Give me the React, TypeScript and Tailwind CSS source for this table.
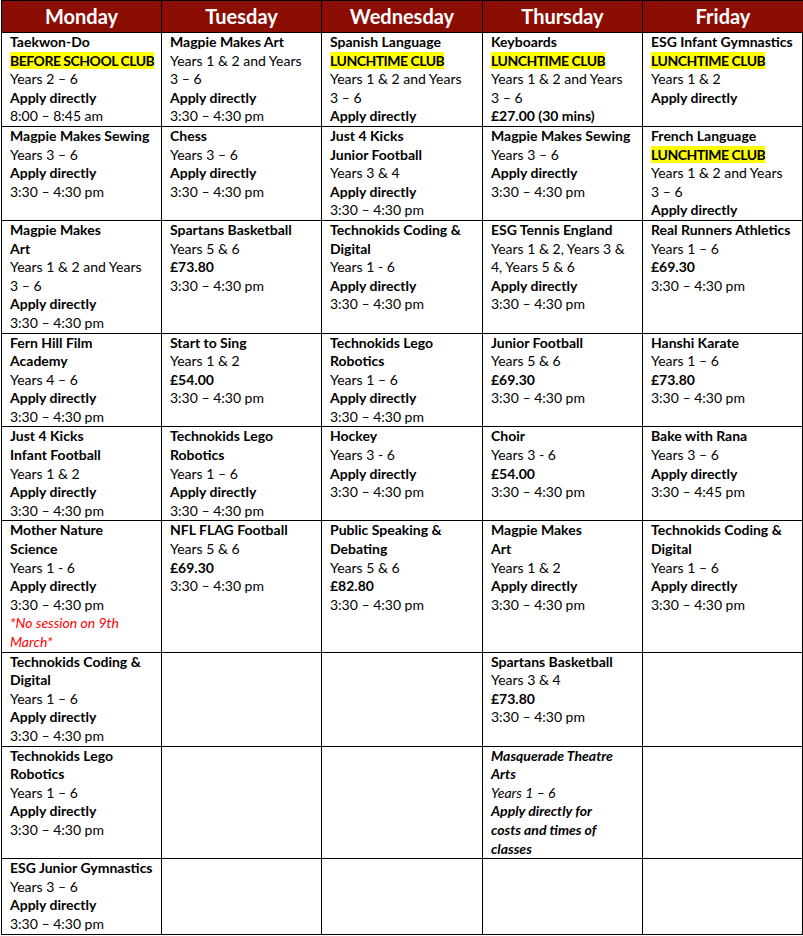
import React from 'react';

type Kind = 'b' | 'n' | 'h' | 'r' | 'bi' | 'i';
type Line = [Kind, string];
type Cell = Line[];

const days = ['Monday', 'Tuesday', 'Wednesday', 'Thursday', 'Friday'];

const time = '3:30 – 4:30 pm';
const apply: Line = ['b', 'Apply directly'];

const rows: Cell[][] = [
  [
    [['b', 'Taekwon-Do'], ['h', 'BEFORE SCHOOL CLUB'], ['n', 'Years 2 – 6'], apply, ['n', '8:00 – 8:45 am']],
    [['b', 'Magpie Makes Art'], ['n', 'Years 1 & 2 and Years'], ['n', '3 – 6'], apply, ['n', time]],
    [['b', 'Spanish Language'], ['h', 'LUNCHTIME CLUB'], ['n', 'Years 1 & 2 and Years'], ['n', '3 – 6'], apply],
    [['b', 'Keyboards'], ['h', 'LUNCHTIME CLUB'], ['n', 'Years 1 & 2 and Years'], ['n', '3 – 6'], ['b', '£27.00 (30 mins)']],
    [['b', 'ESG Infant Gymnastics'], ['h', 'LUNCHTIME CLUB'], ['n', 'Years 1 & 2'], apply],
  ],
  [
    [['b', 'Magpie Makes Sewing'], ['n', 'Years 3 – 6'], apply, ['n', time]],
    [['b', 'Chess'], ['n', 'Years 3 – 6'], apply, ['n', time]],
    [['b', 'Just 4 Kicks'], ['b', 'Junior Football'], ['n', 'Years 3 & 4'], apply, ['n', time]],
    [['b', 'Magpie Makes Sewing'], ['n', 'Years 3 – 6'], apply, ['n', time]],
    [['b', 'French Language'], ['h', 'LUNCHTIME CLUB'], ['n', 'Years 1 & 2 and Years'], ['n', '3 – 6'], apply],
  ],
  [
    [['b', 'Magpie Makes'], ['b', 'Art'], ['n', 'Years 1 & 2 and Years'], ['n', '3 – 6'], apply, ['n', time]],
    [['b', 'Spartans Basketball'], ['n', 'Years 5 & 6'], ['b', '£73.80'], ['n', time]],
    [['b', 'Technokids Coding &'], ['b', 'Digital'], ['n', 'Years 1 - 6'], apply, ['n', time]],
    [['b', 'ESG Tennis England'], ['n', 'Years 1 & 2, Years 3 &'], ['n', '4, Years 5 & 6'], apply, ['n', time]],
    [['b', 'Real Runners Athletics'], ['n', 'Years 1 – 6'], ['b', '£69.30'], ['n', time]],
  ],
  [
    [['b', 'Fern Hill Film'], ['b', 'Academy'], ['n', 'Years 4 – 6'], apply, ['n', time]],
    [['b', 'Start to Sing'], ['n', 'Years 1 & 2'], ['b', '£54.00'], ['n', time]],
    [['b', 'Technokids Lego'], ['b', 'Robotics'], ['n', 'Years 1 – 6'], apply, ['n', time]],
    [['b', 'Junior Football'], ['n', 'Years 5 & 6'], ['b', '£69.30'], ['n', time]],
    [['b', 'Hanshi Karate'], ['n', 'Years 1 – 6'], ['b', '£73.80'], ['n', time]],
  ],
  [
    [['b', 'Just 4 Kicks'], ['b', 'Infant Football'], ['n', 'Years 1 & 2'], apply, ['n', time]],
    [['b', 'Technokids Lego'], ['b', 'Robotics'], ['n', 'Years 1 – 6'], apply, ['n', time]],
    [['b', 'Hockey'], ['n', 'Years 3 - 6'], apply, ['n', time]],
    [['b', 'Choir'], ['n', 'Years 3 - 6'], ['b', '£54.00'], ['n', time]],
    [['b', 'Bake with Rana'], ['n', 'Years 3 – 6'], apply, ['n', '3:30 – 4:45 pm']],
  ],
  [
    [['b', 'Mother Nature'], ['b', 'Science'], ['n', 'Years 1 - 6'], apply, ['n', time], ['r', '*No session on 9th'], ['r', 'March*']],
    [['b', 'NFL FLAG Football'], ['n', 'Years 5 & 6'], ['b', '£69.30'], ['n', time]],
    [['b', 'Public Speaking &'], ['b', 'Debating'], ['n', 'Years 5 & 6'], ['b', '£82.80'], ['n', time]],
    [['b', 'Magpie Makes'], ['b', 'Art'], ['n', 'Years 1 & 2'], apply, ['n', time]],
    [['b', 'Technokids Coding &'], ['b', 'Digital'], ['n', 'Years 1 – 6'], apply, ['n', time]],
  ],
  [
    [['b', 'Technokids Coding &'], ['b', 'Digital'], ['n', 'Years 1 – 6'], apply, ['n', time]],
    [],
    [],
    [['b', 'Spartans Basketball'], ['n', 'Years 3 & 4'], ['b', '£73.80'], ['n', time]],
    [],
  ],
  [
    [['b', 'Technokids Lego'], ['b', 'Robotics'], ['n', 'Years 1 – 6'], apply, ['n', time]],
    [],
    [],
    [['bi', 'Masquerade Theatre'], ['bi', 'Arts'], ['i', 'Years 1 – 6'], ['bi', 'Apply directly for'], ['bi', 'costs and times of'], ['bi', 'classes']],
    [],
  ],
  [
    [['b', 'ESG Junior Gymnastics'], ['n', 'Years 3 – 6'], apply, ['n', time]],
    [],
    [],
    [],
    [],
  ],
];

const kindClass: Record<Kind, string> = {
  b: 'font-bold',
  n: '',
  h: 'font-bold tracking-[-0.5px]',
  r: 'italic text-[#ff0000]',
  bi: 'font-bold italic',
  i: 'italic',
};

const CellView: React.FC<{ lines: Cell; last: boolean }> = ({ lines, last }) => (
  <div className={`border-b border-black pl-2 ${last ? '' : 'border-r'}`}>
    {lines.map(([k, t], i) => (
      <div key={i} className={`whitespace-nowrap ${kindClass[k]}`}>
        {k === 'h' ? <span className="bg-[#ffff00]">{t}</span> : t}
      </div>
    ))}
  </div>
);

export default function App() {
  return (
    <div className="w-[803px] h-[936px] bg-white overflow-hidden">
      <div
        className="ml-[1px] w-[802px] grid grid-cols-[160px_160px_161px_160px_160px] border-l border-t border-r border-black text-[14px] leading-[18.6px] text-black"
        style={{ fontFamily: 'Lato, "Open Sans", sans-serif' }}
      >
        {days.map((d, i) => (
          <div
            key={d}
            className={`h-[32px] pb-[1px] flex items-center justify-center bg-[#8c0d04] text-white font-bold text-[20px] border-b border-black ${i < 4 ? 'border-r' : ''}`}
          >
            {d}
          </div>
        ))}
        {rows.map((row, r) =>
          row.map((cell, c) => <CellView key={`${r}-${c}`} lines={cell} last={c === 4} />)
        )}
      </div>
    </div>
  );
}
